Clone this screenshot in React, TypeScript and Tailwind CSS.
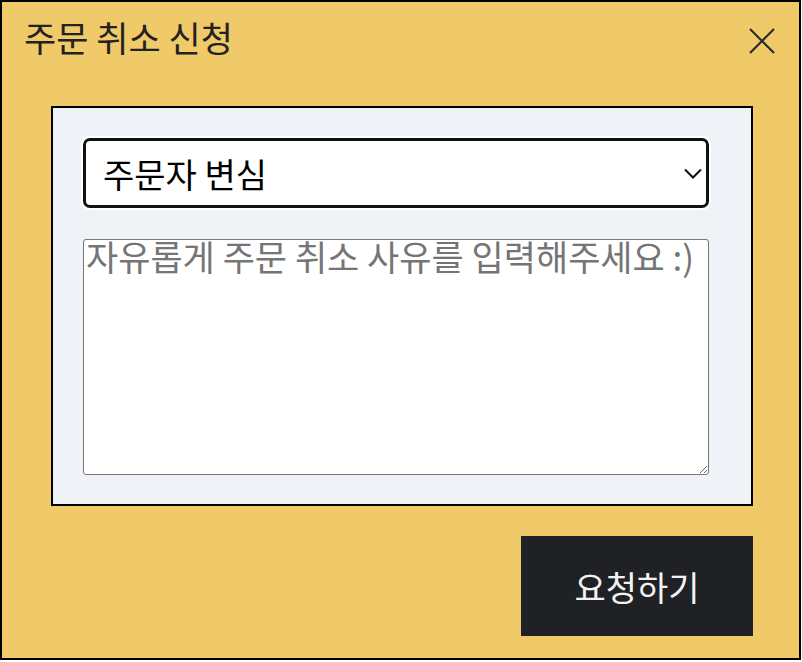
import { useState } from 'react';

const CancelModal = () => {
  const [reason, setReason] = useState('주문자 변심');
  const [detail, setDetail] = useState('');

  return (
    <div className="w-[801px] h-[660px] border-2 border-black bg-[#f0ca68] flex flex-col font-['Noto_Sans_CJK_KR','Noto_Sans',sans-serif]">
      <div className="h-[104px] flex items-start justify-between pl-[22px] pr-[24px] pt-[15px]">
        <h2 className="text-[35px] leading-[40px] text-[#222]">주문 취소 신청</h2>
        <button className="mt-[11px] w-[26px] h-[26px] flex items-center justify-center">
          <svg width="26" height="26" viewBox="0 0 26 26" fill="none" stroke="#2b2b2b" strokeWidth="2.2">
            <path d="M1 1 25 25M25 1 1 25" />
          </svg>
        </button>
      </div>

      <div className="ml-[49px] w-[702px] h-[400px] border-2 border-black bg-[#eff3f7] pt-[30px] pl-[30px] flex flex-col gap-[31px]">
        <div className="relative w-[626px]">
          <select
            value={reason}
            onChange={(e) => setReason(e.target.value)}
            className="appearance-none w-full h-[70px] border-[3.5px] border-[#111] rounded-[7px] bg-white pl-[17px] text-[34px] text-black outline-none shadow-[0_0_0_2px_#fff]"
          >
            <option>주문자 변심</option>
            <option>배송 지연</option>
            <option>상품 정보 상이</option>
            <option>기타</option>
          </select>
          <svg className="absolute right-[7px] top-[30px] pointer-events-none" width="18" height="11" viewBox="0 0 18 11" fill="none" stroke="#111" strokeWidth="2">
            <path d="M1 1.5 9 9.5 17 1.5" />
          </svg>
        </div>

        <textarea
          value={detail}
          onChange={(e) => setDetail(e.target.value)}
          placeholder="자유롭게 주문 취소 사유를 입력해주세요 :)"
          className="w-[626px] h-[236px] border border-[#767676] rounded-[3px] bg-white px-[2px] pt-0 pb-[2px] text-[35px] leading-[32px] placeholder:text-[#757575] outline-none"
        />
      </div>

      <div className="flex justify-end pr-[46px] pt-[30px]">
        <button className="w-[232px] h-[100px] bg-[#202124] text-[#f2f2f2] text-[34px]">요청하기</button>
      </div>
    </div>
  );
};

export default function App() {
  return (
    <div className="bg-white w-[802px] h-[662px]">
      <CancelModal />
    </div>
  );
}
